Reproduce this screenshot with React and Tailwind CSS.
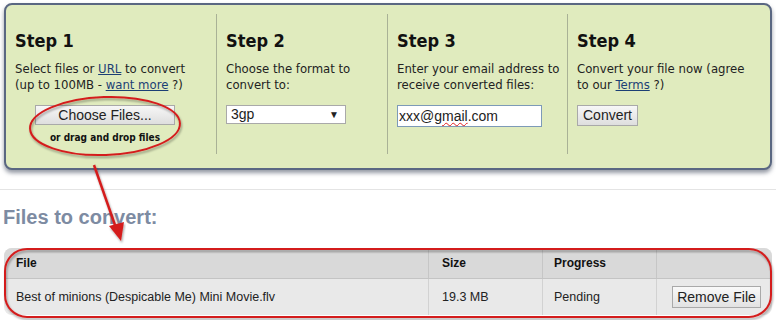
const TAHOMA = { fontFamily: '"DejaVu Sans Condensed", "DejaVu Sans", sans-serif' };
const ARIAL = { fontFamily: '"Liberation Sans", Arial, sans-serif' };

function StepLink({ children }) {
  return <span className="underline text-[#1c3f75]">{children}</span>;
}

function Step({ title, first, children }) {
  return (
    <div className={`flex flex-col pl-[9px] mt-[9px] h-[140px] ${first ? '' : 'border-l border-[#a9b196]'}`}>
      <div className="text-[18px] font-bold text-[#111] leading-[22px] mt-[16px]" style={TAHOMA}>
        {title}
      </div>
      {children}
    </div>
  );
}

function StepText({ children }) {
  return (
    <div className="text-[13px] leading-[16px] text-[#222] mt-[9px] whitespace-nowrap" style={TAHOMA}>
      {children}
    </div>
  );
}

export default function App() {
  return (
    <div className="relative w-[776px] h-[320px] bg-white overflow-hidden">
      {/* Steps panel */}
      <div className="pt-[3px] pl-[4px]">
        <div className="w-[768px] h-[167px] rounded-[8px] border-2 border-[#5a6782] bg-[#e0ebbe] shadow-[0_3px_4px_rgba(60,70,90,0.55)] flex">
          <div className="w-[210px] shrink-0">
            <Step title="Step 1" first>
              <StepText>
                Select files or <StepLink>URL</StepLink> to convert<br />
                (up to 100MB - <StepLink>want more</StepLink> ?)
              </StepText>
              <div className="flex flex-col items-center w-[180px] mt-[12px]">
                <button
                  className="w-[140px] h-[20px] border border-[#a9a9a9] bg-gradient-to-b from-[#f7f7f7] to-[#dedede] text-[14px] leading-[18px] text-[#222]"
                  style={ARIAL}
                >
                  Choose Files...
                </button>
                <div className="text-[10px] font-bold text-[#111] mt-[7px] leading-[12px]" style={TAHOMA}>
                  or drag and drop files
                </div>
              </div>
            </Step>
          </div>
          <div className="w-[171px] shrink-0">
            <Step title="Step 2">
              <StepText>
                Choose the format to<br />convert to:
              </StepText>
              <div
                className="mt-[12px] w-[120px] h-[19px] border border-[#a9a9a9] bg-white flex items-center justify-between pl-[4px] pr-[6px] text-[14px] text-[#222]"
                style={ARIAL}
              >
                <span>3gp</span>
                <span className="text-[10px]">▼</span>
              </div>
            </Step>
          </div>
          <div className="w-[180px] shrink-0">
            <Step title="Step 3">
              <StepText>
                Enter your email address to<br />receive converted files:
              </StepText>
              <div
                className="mt-[12px] w-[145px] h-[22px] border border-[#7d9ab8] bg-white flex items-center pl-[1px] text-[14px] text-[#222]"
                style={ARIAL}
              >
                xxx@<span className="underline decoration-wavy decoration-[#e02020] decoration-1">gmail</span>.com
              </div>
            </Step>
          </div>
          <div className="flex-1">
            <Step title="Step 4">
              <StepText>
                Convert your file now (agree<br />to our <StepLink>Terms</StepLink> ?)
              </StepText>
              <div className="mt-[12px] flex">
                <button
                  className="w-[61px] h-[21px] border border-[#a9a9a9] bg-gradient-to-b from-[#f7f7f7] to-[#dedede] text-[14px] leading-[19px] text-[#222]"
                  style={ARIAL}
                >
                  Convert
                </button>
              </div>
            </Step>
          </div>
        </div>
      </div>

      {/* Divider */}
      <div className="mt-[19px] h-px bg-[#e4e4e4]" />

      <h2 className="ml-[3px] mt-[15px] text-[20px] font-bold text-[#7d8ba2] leading-[24px]" style={ARIAL}>
        Files to convert:
      </h2>

      {/* Files table */}
      <div className="ml-[4px] mt-[19px] w-[768px] rounded-[8px] overflow-hidden bg-[#e9e9e9]" style={ARIAL}>
        <div className="flex h-[31px] bg-[#d9d9d9] border-b border-[#c4c4c4] text-[12px] font-bold text-[#111]">
          <div className="w-[424px] flex items-center pl-[12px]">File</div>
          <div className="w-[114px] flex items-center pl-[13px] border-l border-[#c6c6c6]">Size</div>
          <div className="w-[114px] flex items-center pl-[11px] border-l border-[#c6c6c6]">Progress</div>
          <div className="flex-1 border-l border-[#c6c6c6]" />
        </div>
        <div className="flex h-[36px] text-[12.5px] text-[#222]">
          <div className="w-[424px] flex items-center pl-[12px]">Best of minions (Despicable Me) Mini Movie.flv</div>
          <div className="w-[114px] flex items-center pl-[13px] border-l border-[#d2d2d2]">19.3 MB</div>
          <div className="w-[114px] flex items-center pl-[11px] border-l border-[#d2d2d2]">Pending</div>
          <div className="flex-1 flex items-center pl-[15px] border-l border-[#d2d2d2]">
            <button className="w-[89px] h-[22px] border border-[#a9a9a9] bg-gradient-to-b from-[#f9f9f9] to-[#e2e2e2] text-[14px] leading-[20px] text-[#222]">
              Remove File
            </button>
          </div>
        </div>
      </div>

      {/* Red annotations */}
      <svg className="absolute left-0 top-0 pointer-events-none" width="776" height="320" viewBox="0 0 776 320">
        <defs>
          <filter id="sh" x="-10%" y="-10%" width="120%" height="130%">
            <feDropShadow dx="1" dy="2" stdDeviation="1.2" floodColor="#000" floodOpacity="0.35" />
          </filter>
        </defs>
        <g filter="url(#sh)" fill="none" stroke="#d41f1f" strokeWidth="2">
          <ellipse cx="105" cy="126" rx="75" ry="29" transform="rotate(-2 105 126)" />
          <rect x="5" y="249" width="766" height="68" rx="22" ry="22" />
          <line x1="94" y1="165" x2="116" y2="228" strokeWidth="2.5" />
        </g>
        <polygon points="121,241 109,226 124,222" fill="#d41f1f" filter="url(#sh)" />
      </svg>
    </div>
  );
}
